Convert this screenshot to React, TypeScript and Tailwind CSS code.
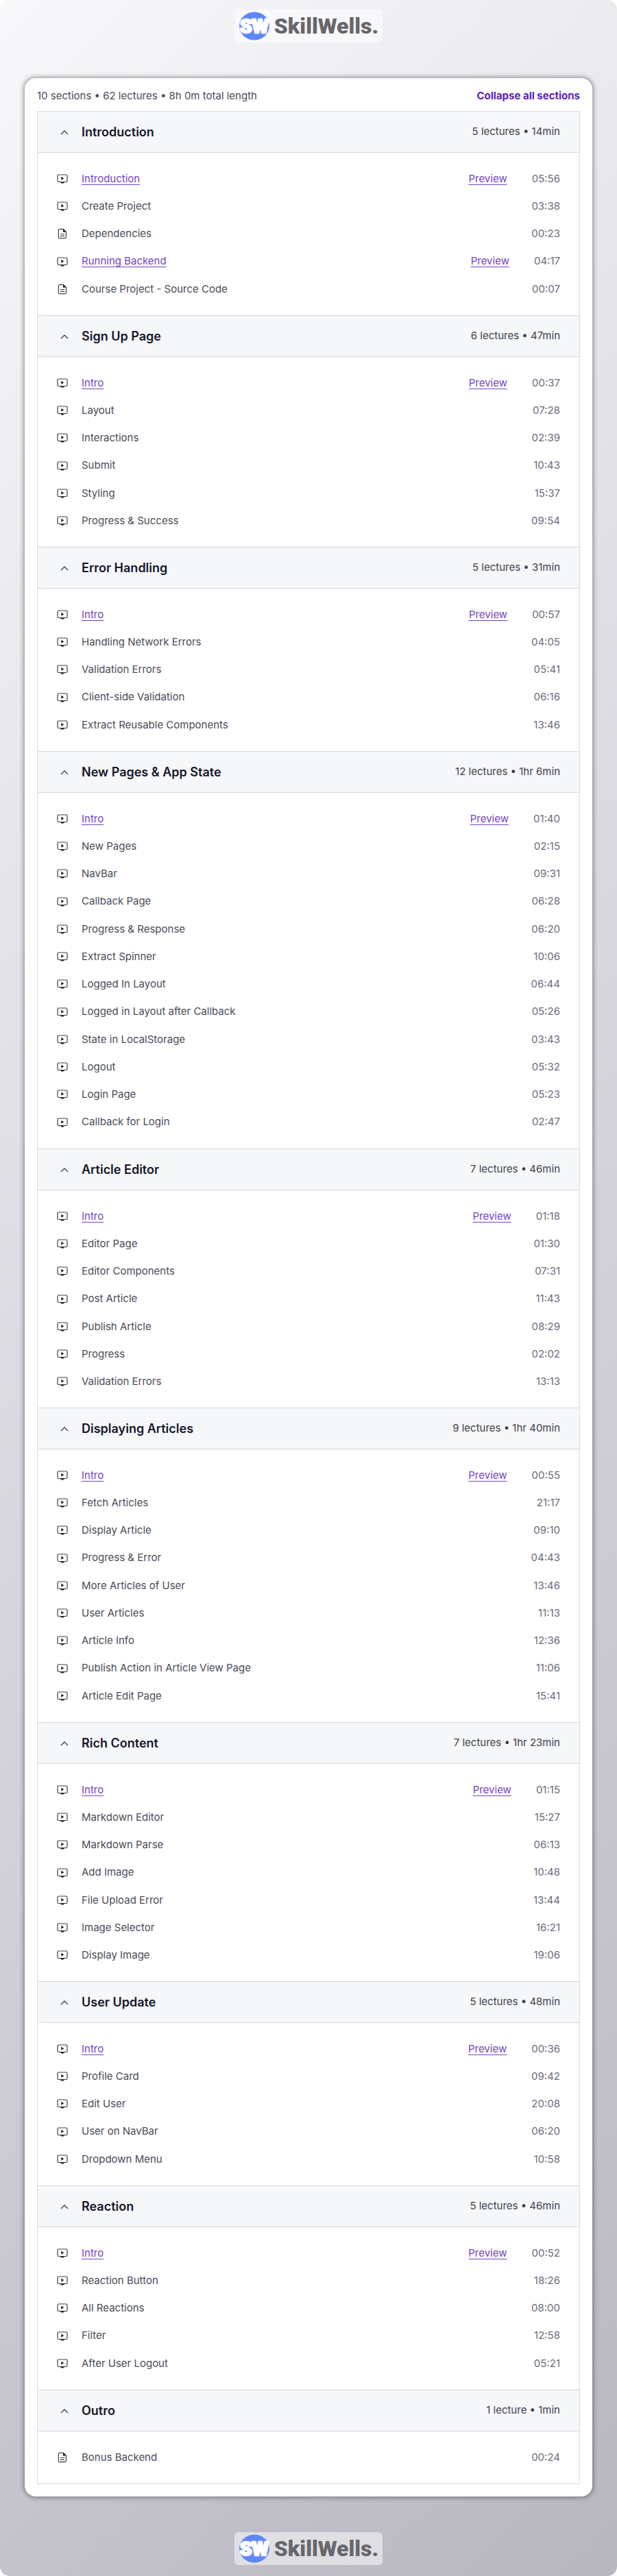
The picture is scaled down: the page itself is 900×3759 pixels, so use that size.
import React from "react";

interface Lecture {
  title: string;
  time: string;
  preview?: boolean;
  doc?: boolean;
}

interface Section {
  title: string;
  summary: string;
  lectures: Lecture[];
}

const sections: Section[] = [
  {
    title: "Introduction",
    summary: "5 lectures • 14min",
    lectures: [
      { title: "Introduction", time: "05:56", preview: true },
      { title: "Create Project", time: "03:38" },
      { title: "Dependencies", time: "00:23", doc: true },
      { title: "Running Backend", time: "04:17", preview: true },
      { title: "Course Project - Source Code", time: "00:07", doc: true },
    ],
  },
  {
    title: "Sign Up Page",
    summary: "6 lectures • 47min",
    lectures: [
      { title: "Intro", time: "00:37", preview: true },
      { title: "Layout", time: "07:28" },
      { title: "Interactions", time: "02:39" },
      { title: "Submit", time: "10:43" },
      { title: "Styling", time: "15:37" },
      { title: "Progress & Success", time: "09:54" },
    ],
  },
  {
    title: "Error Handling",
    summary: "5 lectures • 31min",
    lectures: [
      { title: "Intro", time: "00:57", preview: true },
      { title: "Handling Network Errors", time: "04:05" },
      { title: "Validation Errors", time: "05:41" },
      { title: "Client-side Validation", time: "06:16" },
      { title: "Extract Reusable Components", time: "13:46" },
    ],
  },
  {
    title: "New Pages & App State",
    summary: "12 lectures • 1hr 6min",
    lectures: [
      { title: "Intro", time: "01:40", preview: true },
      { title: "New Pages", time: "02:15" },
      { title: "NavBar", time: "09:31" },
      { title: "Callback Page", time: "06:28" },
      { title: "Progress & Response", time: "06:20" },
      { title: "Extract Spinner", time: "10:06" },
      { title: "Logged In Layout", time: "06:44" },
      { title: "Logged in Layout after Callback", time: "05:26" },
      { title: "State in LocalStorage", time: "03:43" },
      { title: "Logout", time: "05:32" },
      { title: "Login Page", time: "05:23" },
      { title: "Callback for Login", time: "02:47" },
    ],
  },
  {
    title: "Article Editor",
    summary: "7 lectures • 46min",
    lectures: [
      { title: "Intro", time: "01:18", preview: true },
      { title: "Editor Page", time: "01:30" },
      { title: "Editor Components", time: "07:31" },
      { title: "Post Article", time: "11:43" },
      { title: "Publish Article", time: "08:29" },
      { title: "Progress", time: "02:02" },
      { title: "Validation Errors", time: "13:13" },
    ],
  },
  {
    title: "Displaying Articles",
    summary: "9 lectures • 1hr 40min",
    lectures: [
      { title: "Intro", time: "00:55", preview: true },
      { title: "Fetch Articles", time: "21:17" },
      { title: "Display Article", time: "09:10" },
      { title: "Progress & Error", time: "04:43" },
      { title: "More Articles of User", time: "13:46" },
      { title: "User Articles", time: "11:13" },
      { title: "Article Info", time: "12:36" },
      { title: "Publish Action in Article View Page", time: "11:06" },
      { title: "Article Edit Page", time: "15:41" },
    ],
  },
  {
    title: "Rich Content",
    summary: "7 lectures • 1hr 23min",
    lectures: [
      { title: "Intro", time: "01:15", preview: true },
      { title: "Markdown Editor", time: "15:27" },
      { title: "Markdown Parse", time: "06:13" },
      { title: "Add Image", time: "10:48" },
      { title: "File Upload Error", time: "13:44" },
      { title: "Image Selector", time: "16:21" },
      { title: "Display Image", time: "19:06" },
    ],
  },
  {
    title: "User Update",
    summary: "5 lectures • 48min",
    lectures: [
      { title: "Intro", time: "00:36", preview: true },
      { title: "Profile Card", time: "09:42" },
      { title: "Edit User", time: "20:08" },
      { title: "User on NavBar", time: "06:20" },
      { title: "Dropdown Menu", time: "10:58" },
    ],
  },
  {
    title: "Reaction",
    summary: "5 lectures • 46min",
    lectures: [
      { title: "Intro", time: "00:52", preview: true },
      { title: "Reaction Button", time: "18:26" },
      { title: "All Reactions", time: "08:00" },
      { title: "Filter", time: "12:58" },
      { title: "After User Logout", time: "05:21" },
    ],
  },
  {
    title: "Outro",
    summary: "1 lecture • 1min",
    lectures: [{ title: "Bonus Backend", time: "00:24", doc: true }],
  },
];

const VideoIcon = () => (
  <svg className="h-4 w-4 shrink-0" viewBox="0 0 16 16" fill="none" aria-hidden="true">
    <rect x="1" y="2" width="14" height="10.5" rx="1.5" stroke="#3e3f4c" strokeWidth="1.2" />
    <path d="M6.3 4.7v5l4-2.5z" fill="#1c1d2b" />
    <path d="M4.5 12.5h7v.8l-1.7.3v.9H6.2v-.9l-1.7-.3z" fill="#1c1d2b" />
  </svg>
);

const DocIcon = () => (
  <svg className="h-4 w-4 shrink-0" viewBox="0 0 16 16" fill="none" aria-hidden="true">
    <path
      d="M4 1.4h5.5l3.900 3.900v7.700a1.600 1.600 0 0 1-1.600 1.600H4a1.600 1.600 0 0 1-1.600-1.600V3A1.600 1.600 0 0 1 4 1.400z"
      stroke="#3e3f4c"
      strokeWidth="1.2"
    />
    <path d="M9 1l4.800 4.600H9z" fill="#1c1d2b" />
    <path d="M5 8.500h6M5 11.300h6" stroke="#3e3f4c" strokeWidth="1.2" />
  </svg>
);

const ChevronIcon = () => (
  <svg className="h-4 w-4 shrink-0" viewBox="0 0 16 16" fill="none" aria-hidden="true">
    <path d="M3 11l5-5 5 5" stroke="#3e3f4c" strokeWidth="1.3" />
  </svg>
);

const Logo = () => (
  <div className="flex h-12 items-center gap-1.5 rounded-md bg-white/50 px-1.5">
    <svg className="h-11 w-[46px] shrink-0" viewBox="0 0 46 44" aria-hidden="true">
      <ellipse cx="23" cy="22" rx="22" ry="20.5" fill="#5f86fb" />
      <text
        x="23"
        y="32"
        textAnchor="middle"
        className="font-['Roboto',sans-serif] text-[28px] font-black"
        fill="#fff"
        stroke="#fff"
        strokeWidth="2.500"
      >
        SW
      </text>
    </svg>
    <span className="font-['Roboto',sans-serif] text-[32px] leading-none font-black text-[#67676b]">
      SkillWells.
    </span>
  </div>
);

const LectureRow = ({ title, time, preview, doc }: Lecture) => {
  return (
    <li className="flex h-10 items-center text-[15px] text-[#4a4b58] nth-[4n]:h-[41px]">
      {doc ? <DocIcon /> : <VideoIcon />}
      {preview ? (
        <a href="#" className="ml-5 text-[#7543c4] underline underline-offset-3">
          {title}
        </a>
      ) : (
        <span className="ml-5">{title}</span>
      )}
      <div className="ml-auto flex gap-9">
        {preview && (
          <a href="#" className="text-[#7543c4] underline underline-offset-3">
            Preview
          </a>
        )}
        <span className="text-[#6a6b7b]">{time}</span>
      </div>
    </li>
  );
};

const SectionPanel = ({ title, summary, lectures }: Section) => {
  return (
    <section className="border-b border-[#d5d6e0]">
      <button className="flex h-[60px] w-full items-center border-b border-[#d5d6e0] bg-[#f6f7f9] pr-7 pl-[31px] text-left">
        <ChevronIcon />
        <span className="ml-[17px] text-[18px] font-semibold text-[#14152a]">{title}</span>
        <span className="ml-auto text-[15px] text-[#3e3f4c]">{summary}</span>
      </button>
      <ul className="py-[18px] pr-7 pl-7">
        {lectures.map((lecture) => (
          <LectureRow key={lecture.title} {...lecture} />
        ))}
      </ul>
    </section>
  );
};

const App = () => {
  return (
    <div className="bg-white font-['Inter',sans-serif]">
      <div className="flex flex-col items-center rounded-[14px] bg-linear-135 from-[#f8f8fb] via-[#d7d6dd] to-[#b8b7c1] px-9 pt-3.5 pb-4">
        <Logo />
        <main className="my-[52px] w-full rounded-2xl bg-white px-[18px] pb-[18px] shadow-[0_0_7px_1px_rgba(0,0,0,0.45)]">
          <div className="flex h-12 items-center justify-between pt-1 text-[15px] text-[#4a4b58]">
            <span>10 sections • 62 lectures • 8h 0m total length</span>
            <button className="font-bold text-[#5a1fb5]">Collapse all sections</button>
          </div>
          <div className="border border-b-0 border-[#d9dae3]">
            {sections.map((section) => (
              <SectionPanel key={section.title} {...section} />
            ))}
          </div>
        </main>
        <Logo />
      </div>
    </div>
  );
};

export default App;
